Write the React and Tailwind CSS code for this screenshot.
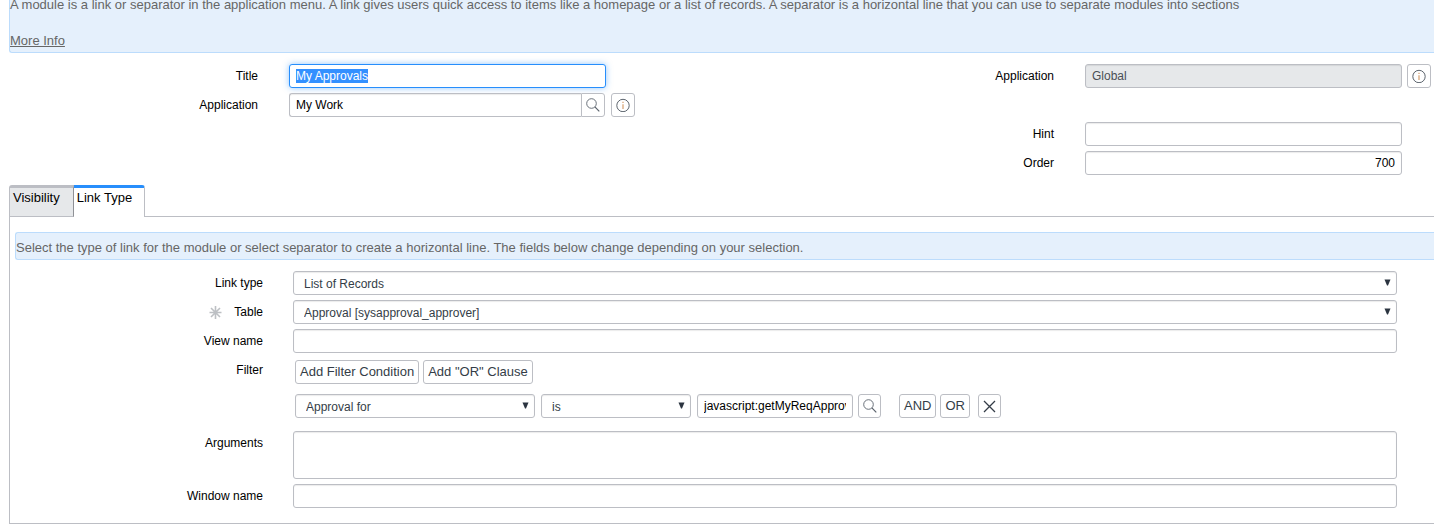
import React, { useEffect, useRef, useState } from "react";

const inputClass =
  "block h-6 w-full min-w-0 rounded-[3px] border border-[#bcbec4] bg-white px-1.5 text-xs text-black shadow-[inset_0_1px_1px_rgba(0,0,0,0.08)] outline-none";

const buttonClass =
  "flex h-6 shrink-0 items-center justify-center rounded-[3px] border border-[#bcbec4] bg-white text-[13px] text-[#343d47]";

const SearchIcon = () => (
  <svg width="14" height="14" viewBox="0 0 14 14" fill="none" stroke="#5a626c">
    <circle cx="5.5" cy="5.5" r="4.8" strokeWidth="0.9" />
    <path d="M8.9 8.9 13.3 13.3" strokeWidth="1.2" />
  </svg>
);

const InfoIcon = () => (
  <svg width="14" height="14" viewBox="0 0 14 14" fill="none" stroke="#4a525c">
    <circle cx="7" cy="7.5" r="6.2" strokeWidth="0.9" />
    <path d="M7 6.2V11M7 3.8V5" stroke="#d9a679" strokeWidth="1.3" />
  </svg>
);

const CloseIcon = () => (
  <svg width="13" height="13" viewBox="0 0 13 13" fill="none" stroke="#343d47">
    <path d="M1 1 12 12M12 1 1 12" strokeWidth="1.3" />
  </svg>
);

const RequiredIcon = () => (
  <svg width="13" height="13" viewBox="0 0 13 13" stroke="#bdc0c4">
    <path d="M6.5 0V13M0.5 6.5H12.5M2 2 11 11M11 2 2 11" strokeWidth="1.6" />
  </svg>
);

const InfoButton = () => (
  <button type="button" aria-label="Info" className={`${buttonClass} w-6`}>
    <InfoIcon />
  </button>
);

// row of the upper form: label, field and room for the info button
const HeaderRow = ({ id, label, action, children }) => (
  <div className="flex h-6">
    <label htmlFor={id} className="w-[249px] shrink-0 text-right text-xs leading-6">
      {label}
    </label>
    <div className="ml-[31px] min-w-0 flex-1">{children}</div>
    <div className="ml-[5px] w-6 shrink-0">{action}</div>
  </div>
);

const PanelRow = ({ id, label, required, children }) => (
  <div className="flex">
    <label
      htmlFor={id}
      className="flex h-6 w-[253px] shrink-0 items-center justify-end gap-3 text-xs leading-6"
    >
      {required && <RequiredIcon />}
      {label}
    </label>
    <div className="ml-[30px] min-w-0 flex-1">{children}</div>
  </div>
);

const Select = ({ id, label, options, className = "w-full" }) => (
  <div className={`relative ${className}`}>
    <select
      id={id}
      aria-label={label}
      className="block h-6 w-full appearance-none rounded-[3px] border border-[#bcbec4] bg-white pl-2.5 pr-5 pt-px text-xs text-[#343d47] shadow-[inset_0_1px_1px_rgba(0,0,0,0.08)] outline-none"
    >
      {options.map((option) => (
        <option key={option}>{option}</option>
      ))}
    </select>
    <svg
      className="pointer-events-none absolute right-1.5 top-2"
      width="7"
      height="7"
      viewBox="0 0 7 7"
      fill="#2b3440"
    >
      <path d="M0.5 0.5H6.5L4 6.5H3Z" />
    </svg>
  </div>
);

const App = () => {
  const [title, setTitle] = useState("My Approvals");
  const [tab, setTab] = useState("Link Type");
  const titleRef = useRef(null);

  useEffect(() => {
    titleRef.current.focus();
    titleRef.current.select();
  }, []);

  return (
    <div className="overflow-hidden bg-white pl-[9px] font-['Liberation_Sans',Arial,sans-serif] text-black">
      <div className="rounded-bl-[3px] border-b border-l border-[#bcdcfc] bg-[#e5f0fc] pb-0.5 text-[13px] leading-[18px] text-[#666]">
        <p className="-mt-1 whitespace-nowrap">
          A module is a link or separator in the application menu. A link gives users quick access
          to items like a homepage or a list of records. A separator is a horizontal line that you
          can use to separate modules into sections
        </p>
        <a href="#more" className="mt-[18px] inline-block underline">
          More Info
        </a>
      </div>

      <form className="mt-[11px] grid grid-cols-2 gap-x-[170px] pr-[3px]">
        <div className="flex flex-col gap-[5px]">
          <HeaderRow id="title" label="Title">
            <input
              id="title"
              ref={titleRef}
              value={title}
              onChange={(e) => setTitle(e.target.value)}
              className="block h-6 w-full rounded-[3px] border border-[#278efc] bg-white px-1.5 text-xs shadow-[0_0_6px_rgba(39,142,252,0.5)] outline-none selection:bg-[#3390ff] selection:text-white"
            />
          </HeaderRow>
          <HeaderRow id="application" label="Application" action={<InfoButton />}>
            <div className="flex pr-px">
              <input
                id="application"
                defaultValue="My Work"
                className="block h-6 min-w-0 flex-1 rounded-l-[3px] border border-r-0 border-[#bcbec4] bg-white px-1.5 text-xs shadow-[inset_0_1px_1px_rgba(0,0,0,0.08)] outline-none"
              />
              <button
                type="button"
                aria-label="Look up application"
                className="flex h-6 w-6 items-center justify-center rounded-r-[3px] border border-[#bcbec4] bg-white"
              >
                <SearchIcon />
              </button>
            </div>
          </HeaderRow>
        </div>

        <div className="flex flex-col gap-[5px]">
          <HeaderRow id="scope" label="Application" action={<InfoButton />}>
            <input
              id="scope"
              readOnly
              defaultValue="Global"
              className="block h-6 w-full rounded-[3px] border border-[#bcbec4] bg-[#e6e8ea] px-1.5 text-xs text-[#4a4f55] shadow-[inset_0_1px_1px_rgba(0,0,0,0.08)] outline-none"
            />
          </HeaderRow>
          <div className="h-6" />
          <HeaderRow id="hint" label="Hint">
            <input id="hint" className={inputClass} />
          </HeaderRow>
          <HeaderRow id="order" label="Order">
            <input id="order" defaultValue="700" className={`${inputClass} text-right`} />
          </HeaderRow>
        </div>
      </form>

      <div role="tablist" className="mt-2.5 flex">
        {["Visibility", "Link Type"].map((name) => (
          <button
            key={name}
            type="button"
            role="tab"
            aria-selected={tab === name}
            onClick={() => setTab(name)}
            className={`relative -mb-px flex h-8 items-start border-t-[3px] pt-px text-[13px] leading-[18px] ${
              tab === name
                ? "rounded-tr-[3px] border-r border-r-[#bcbec4] border-t-[#278efc] bg-white pl-[3px] pr-3"
                : "rounded-tl-[3px] border-x border-b border-[#bcbec4] border-r-[#8f9196] bg-[#e6e8ea] pl-[3px] pr-[13px]"
            }`}
          >
            {name}
          </button>
        ))}
      </div>

      <div className="border-y border-l border-[#bcbec4] pb-[15px] pt-[15px]">
        <div className="ml-[5px] rounded-l-[3px] border-y border-l border-[#bcdcfc] bg-[#e5f0fc] pb-0.5 pt-1.5 text-[13px] leading-[18px] text-[#666]">
          Select the type of link for the module or select separator to create a horizontal line.
          The fields below change depending on your selection.
        </div>

        <form className="mt-[11px] flex flex-col gap-[5px] pr-[37px]">
          <PanelRow id="link-type" label="Link type">
            <Select id="link-type" options={["List of Records", "Separator"]} />
          </PanelRow>
          <PanelRow id="table" label="Table" required>
            <Select id="table" options={["Approval [sysapproval_approver]"]} />
          </PanelRow>
          <PanelRow id="view-name" label="View name">
            <input id="view-name" className={inputClass} />
          </PanelRow>
          <PanelRow id="filter-field" label="Filter">
            <div className="ml-0.5 pb-2 pt-0.5">
              <div className="flex gap-1">
                <button type="button" className={`${buttonClass} px-1`}>
                  Add Filter Condition
                </button>
                <button type="button" className={`${buttonClass} px-1`}>
                  Add "OR" Clause
                </button>
              </div>
              <div className="mt-2.5 flex">
                <Select id="filter-field" options={["Approval for"]} className="w-60" />
                <Select label="Operator" options={["is", "is not"]} className="ml-1.5 w-[150px]" />
                <div className="ml-1.5 w-[156px]">
                  <input
                    aria-label="Value"
                    defaultValue="javascript:getMyReqApprovals()"
                    className={inputClass}
                  />
                </div>
                <button
                  type="button"
                  aria-label="Look up value"
                  className={`${buttonClass} ml-[5px] w-[23px]`}
                >
                  <SearchIcon />
                </button>
                <button type="button" className={`${buttonClass} ml-[18px] px-1`}>
                  AND
                </button>
                <button type="button" className={`${buttonClass} ml-1 px-1`}>
                  OR
                </button>
                <button
                  type="button"
                  aria-label="Remove condition"
                  className={`${buttonClass} ml-2 w-[23px]`}
                >
                  <CloseIcon />
                </button>
              </div>
            </div>
          </PanelRow>
          <PanelRow id="arguments" label="Arguments">
            <textarea
              id="arguments"
              className="block h-12 w-full resize-none rounded-[3px] border border-[#bcbec4] bg-white px-1.5 text-xs shadow-[inset_0_1px_1px_rgba(0,0,0,0.08)] outline-none"
            />
          </PanelRow>
          <PanelRow id="window-name" label="Window name">
            <input id="window-name" className={inputClass} />
          </PanelRow>
        </form>
      </div>
    </div>
  );
};

export default App;
